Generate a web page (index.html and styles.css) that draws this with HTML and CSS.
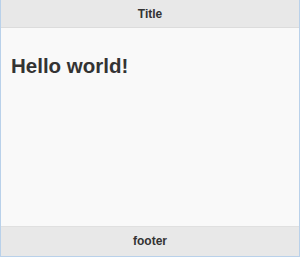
FILE: index.html
```html
<!DOCTYPE html>
<html>
<head>
<meta charset="UTF-8">
<title>Hello world</title>
<link rel="stylesheet" href="styles.css">
</head>
<body>
	<div id="app">
		<header class="bar top">Title</header>
		<main class="content">
			<h1>Hello world!</h1>
		</main>
		<footer class="bar bottom">footer</footer>
	</div>
</body>
</html>
```
FILE: styles.css
```css
html, body { height: 100%; }
body { margin: 0; font-family: "Liberation Sans", Arial, sans-serif; color: #333; }
#app { height: 100%; box-sizing: border-box; display: flex; flex-direction: column; border: 1px solid #b9d1ea; border-top: none; background: #f9f9f9; }
.bar { background: #e8e8e8; text-align: center; font-weight: bold; font-size: 12px; }
.top { height: 27px; line-height: 28px; border-bottom: 1px solid #dcdcdc; }
.content { flex: 1; padding: 0 10px; }
h1 { font-size: 20.5px; margin: 26px 0 0; line-height: 24px; }
.bottom { height: 29px; line-height: 29px; border-top: 1px solid #e0e0e0; }
```
